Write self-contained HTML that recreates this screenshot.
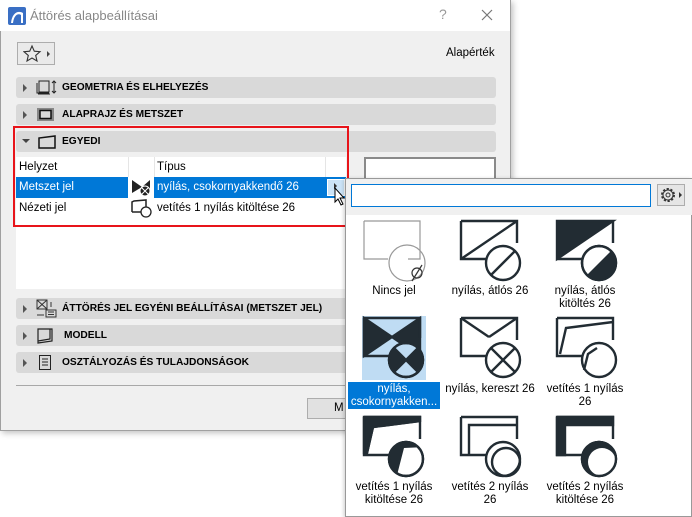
<!DOCTYPE html>
<html><head><meta charset="utf-8"><style>
*{margin:0;padding:0;box-sizing:border-box}
body{width:692px;height:517px;background:#fff;font-family:"Liberation Sans","DejaVu Sans",sans-serif;font-size:11.5px;color:#000;position:relative;overflow:hidden}
.abs{position:absolute}
.dlg{left:0;top:0;width:511px;height:431px;background:#f0f0f0;border:1px solid #a0a0a0;box-shadow:2px 2px 6px rgba(0,0,0,.25)}
.title{left:0;top:0;width:510px;height:31px;background:#fff}
.sec{left:16px;width:480px;height:21px;background:#d9d9d9;border-radius:3px;font-weight:bold;font-size:10.2px;line-height:21px}
.sec .tri{position:absolute;left:7px;top:7px;width:0;height:0;border-top:4px solid transparent;border-bottom:4px solid transparent;border-left:4px solid #555}
.sec .lbl{position:absolute;left:46px}
.lbl2{position:absolute;text-align:center;font-size:11.5px;line-height:13px;width:100px}
</style></head><body>
<div class="abs dlg"></div>
<div class="abs title"></div>
<svg class="abs" style="left:8px;top:7px" width="18" height="18"><rect width="18" height="18" rx="2" fill="#3a6fc4"/><path d="M3 16 C4 6 10 3 15 6 L15 16 L13 16 L13 8 C10 6 6 8 5 16Z" fill="#fff"/></svg>
<div class="abs" style="left:30px;top:8px;color:#888;font-size:13px">Áttörés alapbeállításai</div>
<div class="abs" style="left:439px;top:6px;color:#999;font-size:14px">?</div>
<svg class="abs" style="left:481px;top:9px" width="12" height="12"><path d="M1 1L11 11M11 1L1 11" stroke="#777" stroke-width="1.2"/></svg>
<div class="abs" style="left:17px;top:42px;width:38px;height:23px;border:1px solid #adadad;background:#eaeaea"></div>
<svg class="abs" style="left:23px;top:44px" width="30" height="20"><path d="M9 2 L11.3 7.2 L17 7.7 L12.7 11.4 L14 17 L9 14 L4 17 L5.3 11.4 L1 7.7 L6.7 7.2Z" fill="none" stroke="#333" stroke-width="1.1"/><path d="M24 7 L27 10 L24 13Z" fill="#444"/></svg>
<div class="abs" style="left:446px;top:47px">Alapérték</div>

<div class="abs sec" style="top:77px"><div class="tri"></div><svg class="abs" style="left:20px;top:2px" width="22" height="17"><rect x="3" y="2" width="10" height="11" fill="none" stroke="#222"/><path d="M1 4V14H13M2 15H14" stroke="#222" fill="none"/><path d="M18 2V14M16 4L18 2L20 4M16 12L18 14L20 12" stroke="#222" fill="none"/></svg><span class="lbl">GEOMETRIA ÉS ELHELYEZÉS</span></div>
<div class="abs sec" style="top:104px"><div class="tri"></div><svg class="abs" style="left:20px;top:3px" width="20" height="15"><rect x="1" y="1" width="17" height="13" fill="#888"/><rect x="4" y="3.5" width="11" height="8" fill="#d9d9d9" stroke="#111" stroke-width="1.5"/></svg><span class="lbl">ALAPRAJZ ÉS METSZET</span></div>
<div class="abs sec" style="top:131px"><div class="abs" style="left:6px;top:8px;border-left:4px solid transparent;border-right:4px solid transparent;border-top:4px solid #444"></div><svg class="abs" style="left:22px;top:4px" width="20" height="14"><path d="M1 13V3L17 1V13Z" fill="none" stroke="#111" stroke-width="1.5"/></svg><span class="lbl">EGYEDI</span></div>

<div class="abs" style="left:16px;top:157px;width:330px;height:132px;background:#fff"></div>
<div class="abs" style="left:128px;top:157px;width:1px;height:20px;background:#e5e5e5"></div>
<div class="abs" style="left:154px;top:157px;width:1px;height:20px;background:#e5e5e5"></div>
<div class="abs" style="left:325px;top:157px;width:1px;height:20px;background:#e5e5e5"></div>
<div class="abs" style="left:19px;top:161px">Helyzet</div>
<div class="abs" style="left:157px;top:161px">Típus</div>
<div class="abs" style="left:16px;top:177px;width:330px;height:21px;background:#0078d7"></div>
<div class="abs" style="left:128px;top:177px;width:26px;height:21px;background:#fff"></div>
<div class="abs" style="left:19px;top:181px;color:#fff">Metszet jel</div>
<svg class="abs" style="left:131px;top:179px" width="22" height="18"><path d="M1 1L11 8L1 14Z M19 1L11 8L19 14Z" fill="#222"/><circle cx="14" cy="12" r="5" fill="#222" stroke="#fff"/><path d="M10.5 8.5L17.5 15.5M17.5 8.5L10.5 15.5" stroke="#fff"/></svg>
<div class="abs" style="left:157px;top:181px;color:#fff">nyílás, csokornyakkendő 26</div>
<div class="abs" style="left:327px;top:179px;width:18px;height:17px;border:1px solid #fff;background:#cce4f7"></div>
<svg class="abs" style="left:331px;top:180px" width="20" height="30"><path d="M3 3 L6 6 L3 9Z" fill="#333"/><path d="M4 8 L4 22 L7 19 L10 25 L12 24 L9 18 L13 18Z" fill="#fff" stroke="#000" stroke-width="1"/></svg>
<div class="abs" style="left:19px;top:202px">Nézeti jel</div>
<svg class="abs" style="left:131px;top:199px" width="22" height="20"><path d="M1 13V3L3 2L15 1V8" fill="none" stroke="#222" stroke-width="1.5"/><path d="M1 13H10" stroke="#222" stroke-width="1.5"/><circle cx="15" cy="13" r="5" fill="#fff" stroke="#222" stroke-width="1.3"/></svg>
<div class="abs" style="left:157px;top:202px">vetítés 1 nyílás kitöltése 26</div>
<div class="abs" style="left:13px;top:126px;width:336px;height:101px;border:2px solid #e8141a"></div>
<div class="abs" style="left:364px;top:157px;width:132px;height:30px;border:2px solid #8a8a8a;border-bottom:none;background:#fff"></div>

<div class="abs sec" style="top:298px"><div class="tri"></div><svg class="abs" style="left:20px;top:1px" width="22" height="19"><rect x="1" y="1" width="10" height="9" fill="none" stroke="#333"/><path d="M1 1L11 10M11 1L1 10" stroke="#333"/><rect x="10" y="11" width="10" height="7" fill="none" stroke="#333"/><path d="M12 13H18M12 15.5H18M1 16H8M15 3V8" stroke="#333"/></svg><span class="lbl">ÁTTÖRÉS JEL EGYÉNI BEÁLLÍTÁSAI (METSZET JEL)</span></div>
<div class="abs sec" style="top:325px"><div class="tri"></div><svg class="abs" style="left:20px;top:2px" width="22" height="17"><path d="M2 2H16V14L2 16Z M14 2V12L2 14" fill="none" stroke="#222" stroke-width="1.2"/></svg><span class="lbl" style="left:48px">MODELL</span></div>
<div class="abs sec" style="top:352px"><div class="tri"></div><svg class="abs" style="left:22px;top:2px" width="16" height="17"><rect x="1.5" y="1.5" width="11" height="14" fill="none" stroke="#222"/><path d="M4 5H10M4 8H10M4 11H10" stroke="#222"/></svg><span class="lbl">OSZTÁLYOZÁS ÉS TULAJDONSÁGOK</span></div>
<div class="abs" style="left:16px;top:385px;width:330px;height:1px;background:#a8a8a8"></div>
<div class="abs" style="left:307px;top:398px;width:40px;height:21px;border:1px solid #adadad;background:#e1e1e1;padding:3px 0 0 26px">M</div>

<!-- popup -->
<div class="abs" style="left:345px;top:178px;width:347px;height:339px;background:#fff;border:1px solid #999;box-shadow:-1px 1px 4px rgba(0,0,0,.2)"></div>
<div class="abs" style="left:346px;top:179px;width:346px;height:36px;background:#f0f0f0"></div>
<div class="abs" style="left:351px;top:184px;width:300px;height:23px;border:1px solid #0078d7;background:#fff"></div>
<div class="abs" style="left:657px;top:184px;width:28px;height:22px;border:1px solid #adadad;background:#e5e5e5"></div>
<svg class="abs" style="left:659px;top:186px" width="26" height="18"><circle cx="9" cy="9" r="5.5" fill="none" stroke="#333" stroke-width="3" stroke-dasharray="2 1.5"/><circle cx="9" cy="9" r="5" fill="#e5e5e5" stroke="#333"/><circle cx="9" cy="9" r="2" fill="none" stroke="#333"/><path d="M20 6L23 9L20 12Z" fill="#333"/></svg>

<div class="abs" style="left:362px;top:316px;width:64px;height:64px;background:#bfdcf3"></div>
<div class="abs" style="left:348px;top:382px;width:92px;height:27px;background:#0078d7"></div>

<svg class="abs" style="left:345px;top:178px" width="347" height="339">
<defs><clipPath id="c"><circle r="17"/></clipPath></defs>
<g fill="none" stroke="#222c33" stroke-width="2.4">
<g transform="translate(19,43)" stroke="#999" stroke-width="1.2"><path d="M0 0H56V38H44M0 0V38H24"/><circle cx="43" cy="42" r="18"/><circle cx="53" cy="52" r="5" stroke="#333"/><path d="M48 60L58 44" stroke="#333"/></g>
<g transform="translate(116,43)"><path d="M0 0H56V22M0 0V38H26M0 38L56 0"/><circle cx="42" cy="42" r="17" fill="#fff"/><path d="M30 54L54 30"/></g>
<g transform="translate(212,43)"><path d="M0 0H56L0 38Z" fill="#222c33"/><path d="M56 0V22M0 38H26"/><circle cx="42" cy="42" r="17" fill="#fff"/><g transform="translate(42,42)" clip-path="url(#c)"><path d="M-20 20L20 -20V20Z" fill="#222c33" stroke="none"/></g><circle cx="42" cy="42" r="17"/></g>
<g transform="translate(19,140)"><path d="M0 0L28 19L0 38Z M56 0L28 19L56 38Z" fill="#222c33"/><path d="M0 0H56V20M0 0V38H26"/><circle cx="42" cy="42" r="17" fill="#bfdcf3"/><g transform="translate(42,42)" clip-path="url(#c)"><path d="M0 0L-20 -20L-20 20Z M0 0L20 -20L20 20Z" fill="#222c33" stroke="none"/></g><circle cx="42" cy="42" r="17"/><path d="M30 30L54 54M54 30L30 54"/></g>
<g transform="translate(116,140)"><path d="M0 0H56V22M0 0V38H26M0 0L28 19M56 0L28 19"/><circle cx="42" cy="42" r="17" fill="#fff"/><path d="M30 30L54 54M54 30L30 54"/></g>
<g transform="translate(212,140)"><path d="M0 0H56V22M0 0V38H26M3 36L9 10L56 4"/><circle cx="42" cy="42" r="17" fill="#fff"/><path d="M27 52L31 36L40 30"/></g>
<g transform="translate(19,239)"><path d="M0 0H56V4L9 10L3 36H0Z" fill="#222c33"/><path d="M0 0H56V22M0 0V38H26M3 36L9 10L56 4"/><circle cx="42" cy="42" r="17" fill="#fff"/><g transform="translate(42,42)" clip-path="url(#c)"><path d="M-20 -20H20V-12L-2 -11L-10 20H-20Z" fill="#222c33" stroke="none"/></g><circle cx="42" cy="42" r="17"/></g>
<g transform="translate(116,239)"><path d="M0 0H56V22M0 0V38H26M8 38V8H56"/><circle cx="42" cy="42" r="17" fill="#fff"/><circle cx="45" cy="45" r="14"/></g>
<g transform="translate(212,239)"><path d="M0 0H56V8H8V38H0Z" fill="#222c33"/><path d="M0 0H56V22M0 0V38H26"/><circle cx="42" cy="42" r="17" fill="#222c33"/><circle cx="45" cy="45" r="14" fill="#fff" stroke="none"/><circle cx="42" cy="42" r="17"/></g>
</g></svg>

<div class="lbl2" style="left:344px;top:285px">Nincs jel</div>
<div class="lbl2" style="left:440px;top:285px">nyílás, átlós 26</div>
<div class="lbl2" style="left:535px;top:285px">nyílás, átlós<br>kitöltés 26</div>
<div class="lbl2" style="left:344px;top:383px;color:#fff">nyílás,<br>csokornyakken...</div>
<div class="lbl2" style="left:438px;top:383px;width:104px">nyílás, kereszt 26</div>
<div class="lbl2" style="left:535px;top:383px">vetítés 1 nyílás<br>26</div>
<div class="lbl2" style="left:344px;top:481px">vetítés 1 nyílás<br>kitöltése 26</div>
<div class="lbl2" style="left:440px;top:481px">vetítés 2 nyílás<br>26</div>
<div class="lbl2" style="left:535px;top:481px">vetítés 2 nyílás<br>kitöltése 26</div>
</body></html>
